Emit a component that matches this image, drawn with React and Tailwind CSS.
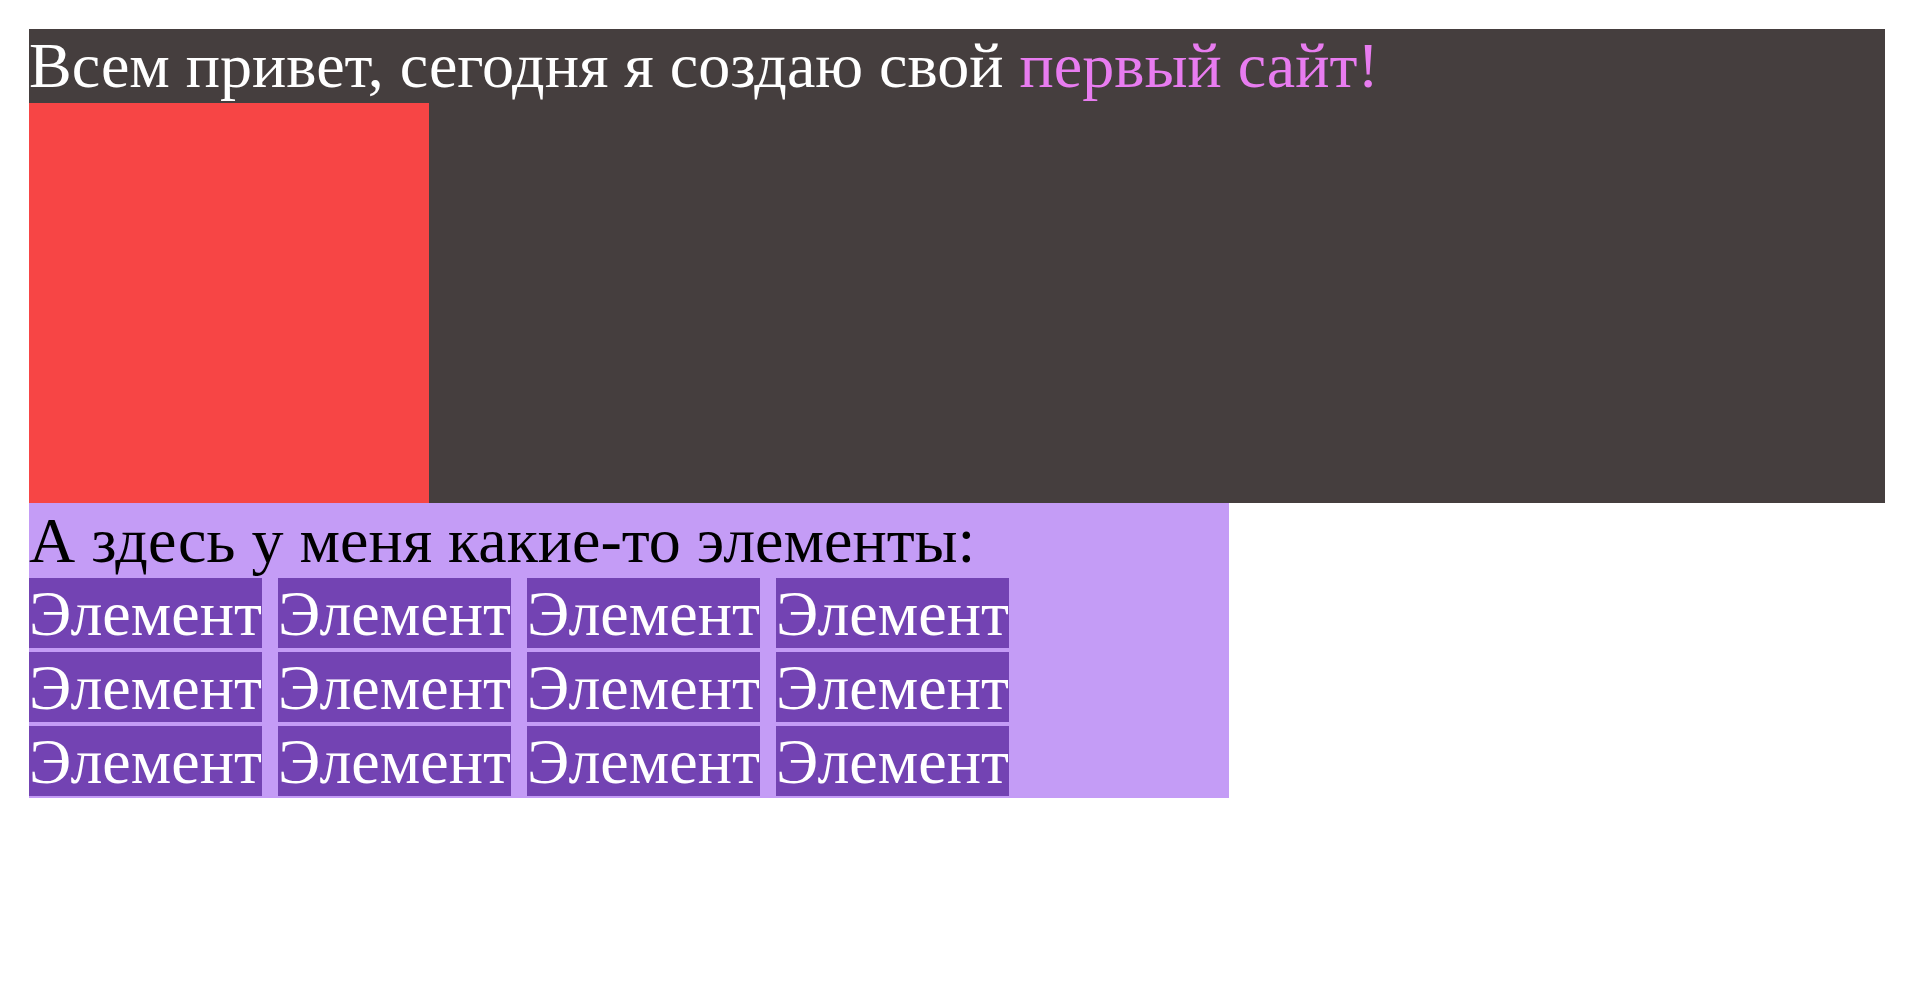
import React from 'react';

const serif = "font-['Liberation_Serif','Times_New_Roman',serif]";

function App() {
  const items = Array.from({ length: 12 }, (_, i) => i);

  return (
    <div className={`min-h-screen bg-white pt-[29px] px-[29px] ${serif}`}>
      {/* Верхний блок */}
      <section className="w-[1856px] bg-[#453e3e]">
        <h1 className="text-[64px] leading-[74px] font-normal text-white">
          Всем привет, сегодня я создаю свой <span className="text-[#e87cf0]">первый сайт!</span>
        </h1>
        <div className="w-[400px] h-[400px] bg-[#f74545]"></div>
      </section>

      {/* Элементы */}
      <section className="w-[1200px] bg-[#c49cf6] pb-[2px]">
        <h2 className="text-[64px] leading-[75px] font-normal text-black">
          А здесь у меня какие-то элементы:
        </h2>
        <div className="grid grid-cols-[repeat(4,233px)] gap-x-[16px] gap-y-[4px]">
          {items.map((i) => (
            <div
              key={i}
              className="h-[70px] bg-[#7343b3] text-white text-[64px] leading-[71px] whitespace-nowrap overflow-hidden"
            >
              Элемент
            </div>
          ))}
        </div>
      </section>
    </div>
  );
}

export default App;
